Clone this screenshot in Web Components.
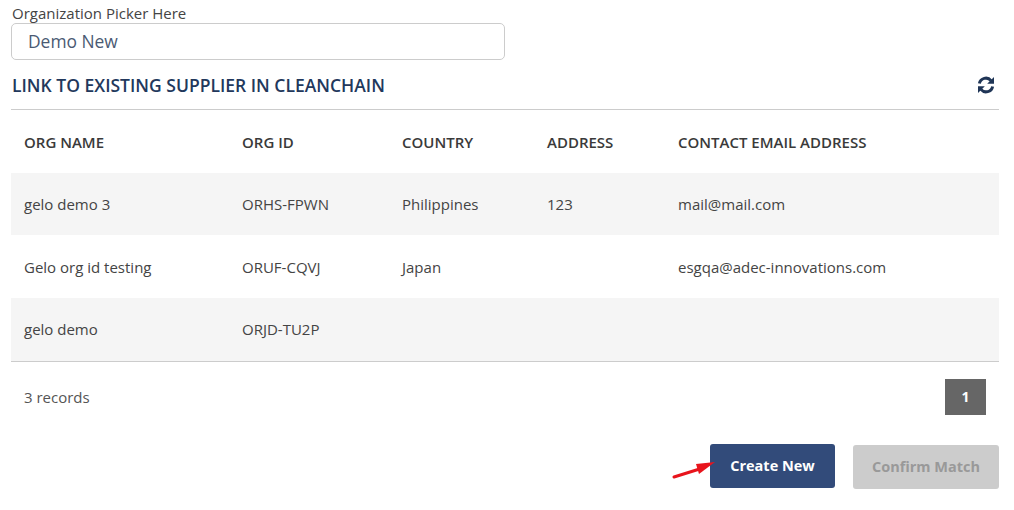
<!DOCTYPE html>
<html>
<head>
<meta charset="utf-8">
<title>Link supplier</title>
<style>
    html, body { margin: 0; padding: 0; background: #fff; }
    body { font-family: "Open Sans", sans-serif; color: #333; }
</style>
</head>
<body>
<supplier-page></supplier-page>

<script>
class OrgPicker extends HTMLElement {
    constructor() {
        super();
        this.attachShadow({ mode: 'open' });
        this.shadowRoot.innerHTML = `
            <style>
                :host { display: block; }
                label { display: block; font-size: 15px; line-height: 16px; margin-bottom: 2px; color: #444; padding-left: 1px; }
                div {
                    box-sizing: border-box;
                    width: 494px;
                    height: 37px;
                    padding-left: 16px;
                    border: 1px solid #ccc;
                    border-radius: 5px;
                    font-size: 17.4px;
                    line-height: 34px;
                    color: #4a5a73;
                }
            </style>
            <label>${this.getAttribute('label')}</label>
            <div>${this.getAttribute('value')}</div>
        `;
    }
}

class SectionHeader extends HTMLElement {
    constructor() {
        super();
        this.attachShadow({ mode: 'open' });
        this.shadowRoot.innerHTML = `
            <style>
                :host {
                    display: flex;
                    align-items: center;
                    justify-content: space-between;
                    height: 50px;
                    border-bottom: 1px solid #ccc;
                    box-sizing: border-box;
                }
                h2 { margin: 0; padding-left: 1px; font-size: 17.5px; font-weight: 600; color: #22385c; }
                svg { display: block; margin-right: 3px; }
            </style>
            <h2><slot></slot></h2>
            <svg width="20" height="20" viewBox="0 0 20 20" fill="none">
                <path d="M3.4 8.6A6.6 6.6 0 0 1 15 5.6" stroke="#1f3556" stroke-width="3"/>
                <path d="M18 2v6.8h-6.8z" fill="#1f3556"/>
                <path d="M16.6 11.4A6.6 6.6 0 0 1 5 14.4" stroke="#1f3556" stroke-width="3"/>
                <path d="M2 18v-6.8h6.8z" fill="#1f3556"/>
            </svg>
        `;
    }
}

class OrgRow extends HTMLElement {
    constructor() {
        super();
        this.attachShadow({ mode: 'open' });
        const cells = (this.getAttribute('cells') || '').split('|');
        this.shadowRoot.innerHTML = `
            <style>
                :host {
                    display: grid;
                    grid-template-columns: 218px 160px 145px 131px 1fr;
                    align-items: center;
                    height: 62.7px;
                    font-size: 15px;
                    color: #444;
                }
                :host([head]) { font-weight: 600; color: #3a3a3a; padding-top: 1px; box-sizing: border-box; }
                :host([shade]) { background: #f5f5f5; }
                span { padding-left: 13px; }
            </style>
            ${cells.map(c => `<span>${c}</span>`).join('')}
        `;
    }
}

class TableFooter extends HTMLElement {
    constructor() {
        super();
        this.attachShadow({ mode: 'open' });
        this.shadowRoot.innerHTML = `
            <style>
                :host {
                    display: flex;
                    align-items: center;
                    justify-content: space-between;
                    height: 72px;
                    padding: 0 13px;
                    border-top: 1px solid #ccc;
                    box-sizing: border-box;
                    font-size: 15px;
                    color: #555;
                }
                b {
                    width: 41px;
                    height: 36px;
                    line-height: 36px;
                    font-size: 14px;
                    text-align: center;
                    background: #666;
                    color: #fff;
                    font-weight: 700;
                }
            </style>
            <span><slot></slot></span>
            <b>${this.getAttribute('page')}</b>
        `;
    }
}

class ActionButton extends HTMLElement {
    constructor() {
        super();
        this.attachShadow({ mode: 'open' });
        this.shadowRoot.innerHTML = `
            <style>
                :host {
                    display: flex;
                    align-items: center;
                    justify-content: center;
                    height: 44px;
                    border-radius: 3px;
                    font-size: 14.5px;
                    font-weight: 700;
                    background: #324b7a;
                    color: #fff;
                }
                :host([disabled]) { background: #ccc; color: #999; }
            </style>
            <slot></slot>
        `;
    }
}

class SupplierPage extends HTMLElement {
    constructor() {
        super();
        this.attachShadow({ mode: 'open' });
        this.shadowRoot.innerHTML = `
            <style>
                :host { display: block; width: 988px; margin-left: 11px; padding-top: 5px; }
                .actions {
                    position: relative;
                    display: flex;
                    justify-content: flex-end;
                    gap: 18px;
                    margin-top: 11px;
                }
                .create { width: 125px; }
                .confirm { width: 146px; margin-top: 1px; }
                svg { position: absolute; left: 660px; top: 15px; }
            </style>
            <org-picker label="Organization Picker Here" value="Demo New"></org-picker>
            <section-header>LINK TO EXISTING SUPPLIER IN CLEANCHAIN</section-header>
            <org-row head cells="ORG NAME|ORG ID|COUNTRY|ADDRESS|CONTACT EMAIL ADDRESS"></org-row>
            <org-row shade cells="gelo demo 3|ORHS-FPWN|Philippines|123|mail@mail.com"></org-row>
            <org-row cells="Gelo org id testing|ORUF-CQVJ|Japan||esgqa@adec-innovations.com"></org-row>
            <org-row shade cells="gelo demo|ORJD-TU2P|||"></org-row>
            <table-footer page="1">3 records</table-footer>
            <div class="actions">
                <action-button class="create">Create New</action-button>
                <action-button class="confirm" disabled>Confirm Match</action-button>
                <svg width="46" height="24" viewBox="0 0 46 24">
                    <path d="M3 18L27 10.5" stroke="#e8141c" stroke-width="3" stroke-linecap="round"/>
                    <path d="M44 3L25 5L28 15z" fill="#e8141c"/>
                </svg>
            </div>
        `;
    }
}

customElements.define('org-picker', OrgPicker);
customElements.define('section-header', SectionHeader);
customElements.define('org-row', OrgRow);
customElements.define('table-footer', TableFooter);
customElements.define('action-button', ActionButton);
customElements.define('supplier-page', SupplierPage);
</script>
</body>
</html>
